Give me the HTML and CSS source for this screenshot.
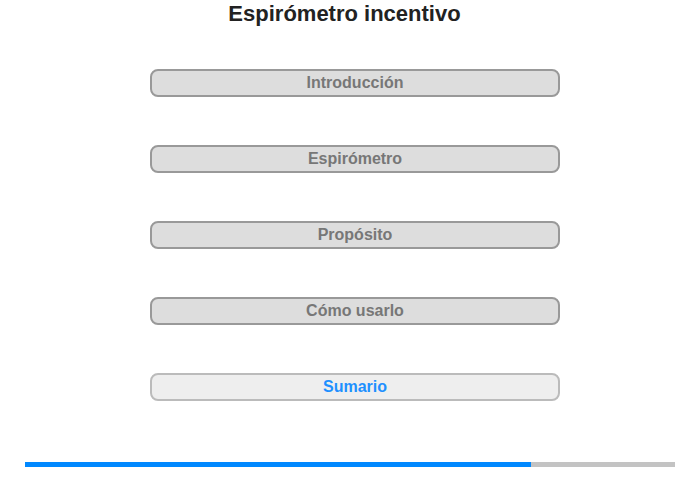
FILE: index.html
```html
<!DOCTYPE html>
<html>
<head>
    <meta charset="utf-8">
    <title>Espirómetro incentivo</title>
    <link rel="stylesheet" href="styles.css">
</head>
<body>
    <div class="page">
        <h1 class="title">Espirómetro incentivo</h1>
        <div class="menu">
            <div class="menu__item">Introducción</div>
            <div class="menu__item">Espirómetro</div>
            <div class="menu__item">Propósito</div>
            <div class="menu__item">Cómo usarlo</div>
            <div class="menu__item menu__item--current">Sumario</div>
        </div>
        <div class="progress">
            <div class="progress__bar" style="width: 506px"></div>
        </div>
    </div>
</body>
</html>
```

FILE: styles.css
```css
* {
    box-sizing: border-box;
}

html, body {
    margin: 0;
    padding: 0;
}

body {
    width: 700px;
    height: 480px;
    background: #fff;
    font-family: "Liberation Sans", Arial, sans-serif;
}

.page {
    display: flex;
    flex-direction: column;
    align-items: center;
}

.title {
    margin: 1px 0 0;
    font-size: 22px;
    line-height: 26px;
    font-weight: bold;
    color: #222;
    padding-right: 11px;
}

.menu {
    display: flex;
    flex-direction: column;
    gap: 48px;
    margin-top: 42px;
    padding-left: 10px;
}

.menu__item {
    width: 410px;
    height: 28px;
    border: 2px solid #999;
    border-radius: 8px;
    background: #ddd;
    color: #777;
    font-size: 16px;
    font-weight: bold;
    line-height: 24px;
    text-align: center;
}

.menu__item--current {
    border-color: #bbb;
    background: #eee;
    color: #1e90ff;
}

.progress {
    width: 650px;
    height: 5px;
    margin-top: 61px;
    background: #c3c3c3;
}

.progress__bar {
    height: 100%;
    background: #0088ff;
}
```
